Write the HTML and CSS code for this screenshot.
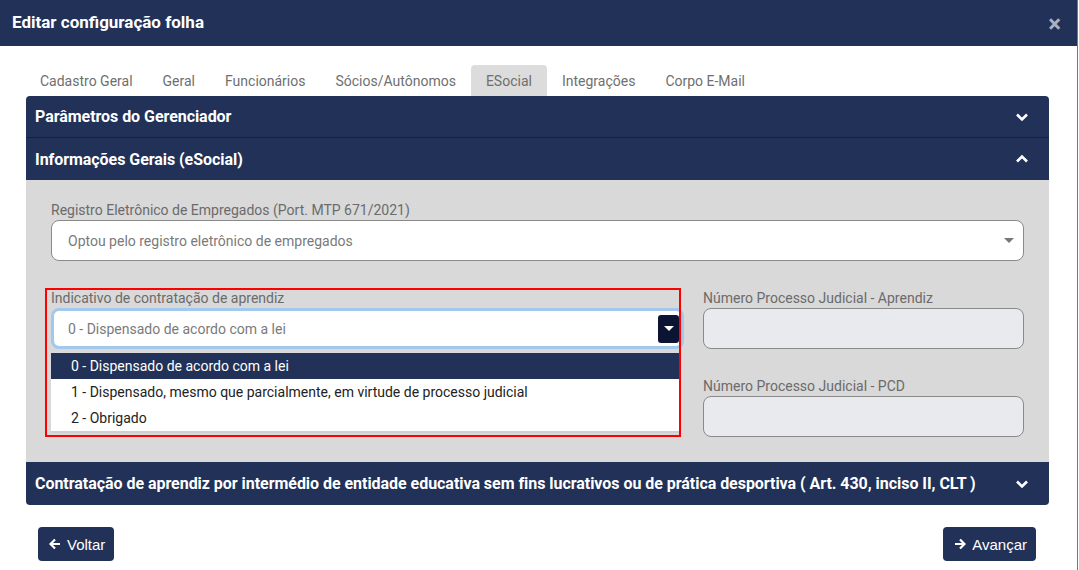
FILE: index.html
```html
<!DOCTYPE html>
<html lang="pt-BR">
<head>
    <meta charset="UTF-8" />
    <title>Editar configuração folha</title>
    <link rel="stylesheet" href="styles.css">
</head>
<body>

<div class="modal">
    <!-- Header -->
    <div class="modal-header">
        <h2>Editar configuração folha</h2>
        <span class="close">&times;</span>
    </div>

    <div class="modal-body">
        <!-- Tabs -->
        <ul class="tabs">
            <li>Cadastro Geral</li>
            <li>Geral</li>
            <li>Funcionários</li>
            <li>Sócios/Autônomos</li>
            <li class="active">ESocial</li>
            <li>Integrações</li>
            <li>Corpo E-Mail</li>
        </ul>

        <!-- Accordion -->
        <div class="accordion">
            <div class="acc-header first">
                <span>Parâmetros do Gerenciador</span>
                <svg class="chev" width="14" height="10" viewBox="0 0 14 10"><path d="M2 2.5 L7 7.5 L12 2.5" fill="none" stroke="#fff" stroke-width="2.6"/></svg>
            </div>
            <div class="acc-header">
                <span>Informações Gerais (eSocial)</span>
                <svg class="chev" width="14" height="10" viewBox="0 0 14 10"><path d="M2 7.5 L7 2.5 L12 7.5" fill="none" stroke="#fff" stroke-width="2.6"/></svg>
            </div>
            <div class="acc-body">
                <div class="field">
                    <label>Registro Eletrônico de Empregados (Port. MTP 671/2021)</label>
                    <div class="select">
                        <span>Optou pelo registro eletrônico de empregados</span>
                        <span class="caret"></span>
                    </div>
                </div>

                <div class="row">
                    <div class="col-left">
                        <div class="highlight"></div>
                        <div class="field">
                            <label>Indicativo de contratação de aprendiz</label>
                            <div class="select focused">
                                <span>0 - Dispensado de acordo com a lei</span>
                                <span class="toggle"><span class="caret white"></span></span>
                            </div>
                            <ul class="options">
                                <li class="selected">0 - Dispensado de acordo com a lei</li>
                                <li>1 - Dispensado, mesmo que parcialmente, em virtude de processo judicial</li>
                                <li>2 - Obrigado</li>
                            </ul>
                        </div>
                    </div>
                    <div class="col-right">
                        <div class="field">
                            <label>Número Processo Judicial - Aprendiz</label>
                            <div class="input"></div>
                        </div>
                        <div class="field">
                            <label>Número Processo Judicial - PCD</label>
                            <div class="input"></div>
                        </div>
                    </div>
                </div>
            </div>
            <div class="acc-header last">
                <span>Contratação de aprendiz por intermédio de entidade educativa sem fins lucrativos ou de prática desportiva ( Art. 430, inciso II, CLT )</span>
                <svg class="chev" width="14" height="10" viewBox="0 0 14 10"><path d="M2 2.5 L7 7.5 L12 2.5" fill="none" stroke="#fff" stroke-width="2.6"/></svg>
            </div>
        </div>

        <!-- Footer buttons -->
        <div class="actions">
            <button class="btn">
                <svg width="12" height="12" viewBox="0 0 12 12"><path d="M11 6 H2 M6 1.5 L1.5 6 L6 10.5" fill="none" stroke="#fff" stroke-width="2.2"/></svg>
                Voltar
            </button>
            <button class="btn">
                <svg width="12" height="12" viewBox="0 0 12 12"><path d="M1 6 H10 M6 1.5 L10.5 6 L6 10.5" fill="none" stroke="#fff" stroke-width="2.2"/></svg>
                Avançar
            </button>
        </div>
    </div>
</div>

</body>
</html>
```

FILE: styles.css
```css
body {
    margin: 0;
    font-family: Roboto, "Liberation Sans", sans-serif;
    background: #fff;
}

.modal {
    width: 1077px;
    height: 570px;
    border-right: 1px solid #777;
    background: #fff;
    overflow: hidden;
}

.modal-header {
    background: #213158;
    height: 46px;
    display: flex;
    align-items: center;
    justify-content: space-between;
    padding: 0 16px 0 12px;
}

.modal-header h2 {
    margin: 0;
    color: #fff;
    font-size: 17px;
    font-weight: 700;
    margin-top: -2px;
}

.close {
    color: #aab0bf;
    font-size: 24px;
    font-weight: 700;
    line-height: 1;
    margin-top: 2px;
}

.modal-body {
    padding: 19px 28px 0 26px;
}

.tabs {
    list-style: none;
    margin: 0 0 0 -1px;
    padding: 0;
    display: flex;
}

.tabs li {
    padding: 0 15px;
    height: 31px;
    line-height: 33px;
    font-size: 14px;
    color: #6f6f6f;
    border-radius: 4px 4px 0 0;
}

.tabs li.active {
    background: #dcdcdc;
}

.accordion {
    border-radius: 4px;
    overflow: hidden;
}

.acc-header {
    background: #213158;
    color: #fff;
    font-size: 16px;
    font-weight: 700;
    height: 42px;
    display: flex;
    align-items: center;
    justify-content: space-between;
    padding: 0 20px 0 9px;
    letter-spacing: -0.05px;
}

.acc-header.first {
    height: 41px;
    border-bottom: 1px solid #15213d;
}

.acc-header.last {
    height: 43px;
    letter-spacing: -0.04px;
}

.acc-body {
    background: #d9d9d9;
    padding: 20px 25px 25px 25px;
}

.field label {
    display: block;
    font-size: 14px;
    color: #6b6b6b;
    line-height: 20px;
}

.select, .input {
    height: 41px;
    box-sizing: border-box;
    border: 1px solid #8a8a8a;
    border-radius: 8px;
    background: #fff;
    display: flex;
    align-items: center;
    justify-content: space-between;
    padding: 0 9px 0 16px;
    font-size: 14px;
    color: #7a7a7a;
}

.caret {
    width: 0;
    height: 0;
    border-left: 5px solid transparent;
    border-right: 5px solid transparent;
    border-top: 5px solid #777;
}

.caret.white {
    border-top-color: #fff;
}

.row {
    display: grid;
    grid-template-columns: 633px 1fr;
    gap: 19px;
    margin-top: 27px;
}

.col-left {
    position: relative;
}

.col-right .field + .field {
    margin-top: 27px;
}

.select.focused {
    border: 3px solid #a3c8ee;
    padding: 0 2px 0 14px;
}

.toggle {
    width: 21px;
    height: 28px;
    background: #0b1533;
    border-radius: 3px;
    display: flex;
    align-items: center;
    justify-content: center;
}

.options {
    list-style: none;
    margin: 4px 4px 0 0;
    padding: 0;
    background: #fff;
    border-bottom: 2px solid #cfcfcf;
}

.options li {
    height: 26px;
    line-height: 26px;
    padding-left: 20px;
    font-size: 14px;
    color: #222;
}

.options li.selected {
    background: #213158;
    color: #fff;
}

.highlight {
    position: absolute;
    left: -6px;
    top: 0;
    width: 632px;
    height: 145px;
    border: 2px solid #ff0000;
    z-index: 2;
    pointer-events: none;
}

.input {
    background: #e8eaed;
}

.actions {
    display: flex;
    justify-content: space-between;
    padding: 22px 13px 0 12px;
}

.btn {
    background: #213158;
    color: #fff;
    border: none;
    border-radius: 4px;
    height: 34px;
    padding: 0 9px 0 11px;
    display: flex;
    align-items: center;
    gap: 6px;
    font-family: "Liberation Sans", Arial, sans-serif;
    font-size: 15px;
}
```
